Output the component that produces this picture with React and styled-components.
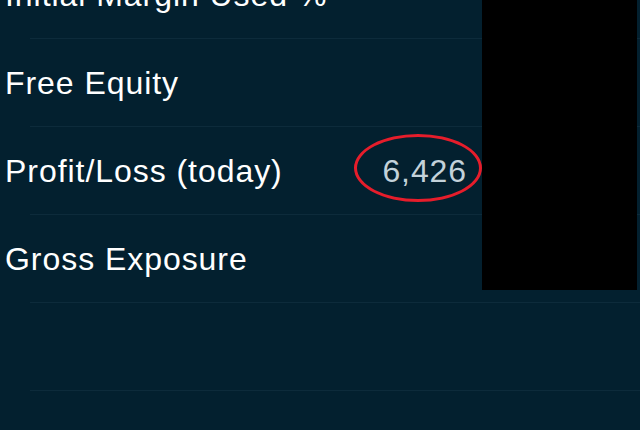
import React from "react";
import styled, { createGlobalStyle } from "styled-components";

const Global = createGlobalStyle`
  html, body { margin: 0; padding: 0; background: #03202f; overflow: hidden; }
  body { width: 640px; height: 430px; font-family: "Liberation Sans", Arial, sans-serif; }
`;

const Screen = styled.div`
  position: relative;
  width: 640px;
  height: 430px;
  overflow: hidden;
  background: #03202f;
`;

const List = styled.div`
  display: flex;
  flex-direction: column;
  margin-top: -49px;
`;

const Row = styled.div`
  position: relative;
  display: flex;
  align-items: center;
  justify-content: space-between;
  height: 88px;
  padding: 0 173px 0 5px;
  box-sizing: border-box;
  &::after {
    content: "";
    position: absolute;
    left: 30px;
    right: 0;
    bottom: 0;
    height: 1px;
    background: #0d2b3b;
  }
`;

const Label = styled.span`
  color: #ffffff;
  font-size: 32px;
  letter-spacing: 0.95px;
`;

const Value = styled.span`
  position: relative;
  color: #c3d2da;
  font-size: 32px;
  letter-spacing: 0.9px;
`;

const Ring = styled.span`
  position: absolute;
  left: calc(50% - 71px);
  top: calc(50% - 37px);
  width: 128px;
  height: 68px;
  box-sizing: border-box;
  border: 3px solid #e61d2b;
  border-radius: 50%;
`;

const Redaction = styled.div`
  position: absolute;
  left: 482px;
  top: 0;
  width: 155px;
  height: 290px;
  background: #000000;
`;

const rows = [
  { label: "Initial Margin Used %" },
  { label: "Free Equity" },
  { label: "Profit/Loss (today)", value: "6,426", marked: true },
  { label: "Gross Exposure" },
  { label: "" },
  { label: "" },
];

export default function App() {
  return (
    <Screen>
      <Global />
      <List>
        {rows.map((r, i) => (
          <Row key={i}>
            <Label>{r.label}</Label>
            {r.value && (
              <Value>
                {r.value}
                {r.marked && <Ring />}
              </Value>
            )}
          </Row>
        ))}
      </List>
      <Redaction />
    </Screen>
  );
}
